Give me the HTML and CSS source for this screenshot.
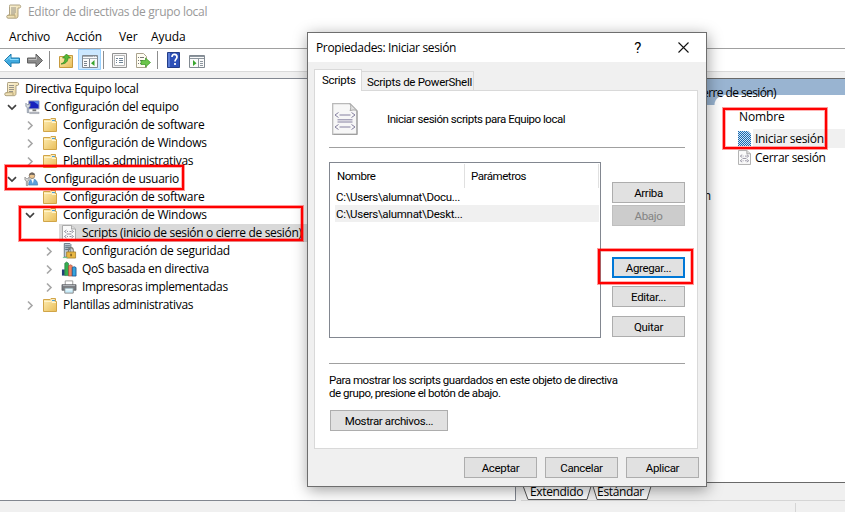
FILE: index.html
```
<!DOCTYPE html>
<html lang="es">
<head>
<meta charset="utf-8">
<title>Editor de directivas de grupo local</title>
<link rel="stylesheet" href="styles.css">
</head>
<body>
<svg class="defs" width="0" height="0">
  <defs>
    <linearGradient id="paper" x1="0" y1="0" x2="1" y2="1"><stop offset="0" stop-color="#fff8dc"/><stop offset="1" stop-color="#e5d09b"/></linearGradient>
    <linearGradient id="fold" x1="0" y1="0" x2="1" y2="1"><stop offset="0" stop-color="#ffeeb5"/><stop offset="1" stop-color="#e8bd57"/></linearGradient>
    <pattern id="dots" width="2" height="2" patternUnits="userSpaceOnUse"><rect width="2" height="2" fill="#cfe3f4"/><rect width="1" height="1" fill="#1668b0"/><rect x="1" y="1" width="1" height="1" fill="#1668b0"/></pattern>
    <symbol id="scroll" viewBox="0 0 16 16"><path d="M4 1.500h9.500c1.600 0 1.600 3 0 3H12v8c0 1.500-.8 2.200-2 2.200H2c-1.700 0-1.700-3 0-3h1.500V3C3.500 2 3.500 1.500 4 1.500z" fill="url(#paper)" stroke="#a79a78" stroke-width=".9"/><path d="M5 4.500h5M5 6.500h5M5 8.500h5M5 10.500h4" stroke="#8c8a84" stroke-width=".9"/><path d="M2 11.700h7v2.300" fill="none" stroke="#b9a878"/></symbol>
    <symbol id="folder" viewBox="0 0 16 16"><path d="M1.500 2.500H8l1-1h4.500v3h1v10h-13z" fill="url(#fold)" stroke="#d1a548"/><path d="M9.500 2.500h3v2h-3z" fill="#fff"/><path d="M10 3.500h3" stroke="#4da0d5"/><path d="M2 4.500h7l1 1h4" fill="none" stroke="#fff3c9"/></symbol>
    <symbol id="script" viewBox="0 0 14 16"><path d="M.5.5h9l4 3.500v11.500H.5z" fill="#fafafa" stroke="#aaa"/><path d="M9.500.5V4h4" fill="#ddd" stroke="#999" stroke-width=".8"/><path d="M4.500 5 2.500 6.500l2 1.500M9.500 5l2 1.500-2 1.500M4.500 10l-2 1.500 2 1.500M9.500 10l2 1.500-2 1.500M5 6.500h1m1.500 0h2M5 11.500h1m1.500 0h2M5 9h4" fill="none" stroke="#777386" stroke-width=".8"/></symbol>
    <symbol id="bigscript" viewBox="0 0 26 32"><path d="M.7.7H18l7 7v23.600H.7z" fill="#f7f7f7" stroke="#b9b9b9" stroke-width="1.300"/><path d="M25 8v23.300H1.500" fill="none" stroke="#999"/><path d="M18 .7c1 2 1 5 0 7 3-1 5-1 7 0z" fill="#e2e2e2" stroke="#aaa"/><path d="M6.500 9.500 3 12l3.500 2.500M19.500 9.500 23 12l-3.500 2.500M7.500 12h11M6.500 21.500 3 24l3.500 2.500M19.500 21.500 23 24l-3.500 2.500M7.500 24h11M5.500 16.800h15M5.500 19h15" fill="none" stroke="#8580a0" stroke-width="1"/></symbol>
    <symbol id="down" viewBox="0 0 16 16"><path d="m4 6.200 4 3.800 4-3.800" fill="none" stroke="#404040" stroke-width="1.700"/></symbol>
    <symbol id="right" viewBox="0 0 16 16"><path d="m6 4.500 4 4-4 4" fill="none" stroke="#a6a6a6" stroke-width="1.600"/></symbol>
    <symbol id="computer" viewBox="0 0 17 16"><path d="M5 1.500h11v8.500H5z" fill="#1822bd" stroke="#a3aaba"/><path d="M10 2h5.500v4z" fill="#5f8fe8"/><path d="M9 10.500h4v2H9z" fill="#777"/><path d="M6 13.500h10v1.500H6z" fill="#b9bcc4" stroke="#858b96" stroke-width=".5"/><path d="M2 4v3.500l1.500 1V14h1.500V8.500l1.500-1V4L5 5.500H3.500z" fill="#d8dde3" stroke="#6f7c8c" stroke-width=".7"/></symbol>
    <symbol id="user" viewBox="0 0 17 16"><circle cx="8.500" cy="4.500" r="3" fill="#edc58d" stroke="#85705b" stroke-width=".7"/><path d="M5.500 4.500C5 0 12 0 11.500 4 9.500 4 8 2.500 5.500 4.500z" fill="#6e655e"/><path d="M5 14.500c0-5 2-6.500 4-6.500 3 0 5.500 2 5.500 6.500z" fill="#5b9fdb" stroke="#35729f" stroke-width=".6"/><path d="m7.500 8 2 5 1-5z" fill="#fff"/><path d="M1 6v3l1.500 1v5H4v-5l1.500-1V6L4 7.500H2.500z" fill="#ddd" stroke="#777" stroke-width=".7"/></symbol>
    <symbol id="server" viewBox="0 0 17 17"><path d="M3.500.5h6l1 1V15h-7z" fill="#c0ccd5" stroke="#647683"/><path d="M4.500 3h5M4.500 5h5M4.500 7h5" stroke="#506775"/><path d="M8 9.500V8c0-4 5-4 5 0v1.500" fill="none" stroke="#7b7b75" stroke-width="1.300"/><path d="M6 9.500h9.500V16H6z" fill="#e9b743" stroke="#a27a25" stroke-width=".8"/><path d="M10.700 11.500V14" stroke="#684e1a" stroke-width="1.400"/><path d="M2 15.500h5" stroke="#70c98b"/></symbol>
    <symbol id="bars" viewBox="0 0 17 17"><path d="M1 9h3v6.500H1z" fill="#223f78"/><path d="M4 2.500 6 1l2 1.500v13H4z" fill="#36ae50" stroke="#196b39" stroke-width=".6"/><path d="M8 5l2-1 2 1v11H8z" fill="#f18462" stroke="#943e2d" stroke-width=".6"/><path d="m12 7 2-1 2 1v9h-4z" fill="#36a5de" stroke="#174a86" stroke-width=".8"/></symbol>
    <symbol id="printer" viewBox="0 0 17 16"><path d="M4.500 1.500h8v5h-8z" fill="#fff" stroke="#999"/><path d="M1 5.500h15v6H1z" fill="#777b80" stroke="#55595d" stroke-width=".7"/><path d="M2 6.500h13" stroke="#b9bdc1"/><path d="M4 9h9v5.500H4z" fill="#c7ecfa" stroke="#888"/><path d="M5 11h7" stroke="#fff"/></symbol>
  </defs>
</svg>
<div class="window">
  <header class="titlebar"><svg class="title-icon"><use href="#scroll"/></svg><span>Editor de directivas de grupo local</span></header>
  <nav class="menu"><span class="m1">Archivo</span><span class="m2">Acción</span><span class="m3">Ver</span><span class="m4">Ayuda</span></nav>
  <div class="toolbar">
    <svg width="220" height="22" viewBox="0 50 220 22">
      <path d="M4.500 61.500 11 55v4h8.500v5H11v4z" fill="#40aadf" stroke="#217cad"/><path d="m6 61.500 4-4v3h8.500" fill="none" stroke="#8bdcff"/>
      <path d="M42.500 61.500 36 55v4h-8.500v5H36v4z" fill="#8a8a8a" stroke="#606060"/><path d="M28.500 60.500h8v-3" fill="none" stroke="#bbb"/>
      <path d="M49.500 52v18M103.500 52v18M157.500 52v18" stroke="#8d8d8d"/>
      <path d="M59.500 57.500H65l1-1h6.500v12h-13z" fill="url(#fold)" stroke="#c69a3e"/><path d="M61 65c3-1 4-3 4-6h-2.500l4-4 4 4H68c0 4-3 6-7 6z" fill="#54b935" stroke="#338421" stroke-width=".7"/>
      <path d="M78.500 50.500h22v20h-22z" fill="#cce8ff" stroke="#99d1ff"/>
      <path d="M82.500 56.500h15v12h-15z" fill="#fafafa" stroke="#818991"/><path d="M83 57.500h14M83 59.500h14" stroke="#a6adb4"/><path d="M93 58h1m1 0h1" stroke="#fff"/>
      <path d="M89.500 60v8M84 62.500h3m-3 2h3m-3 2h3" stroke="#7b858e"/><path d="m94.500 61-3.500 3.200 3.500 2.800z" fill="#38a52d"/>
      <path d="M112.500 54.500h14v14h-14z" fill="#f5f5f5" stroke="#929292"/><path d="M114.500 56.500h10v10h-10z" fill="#fff" stroke="#b6b6b6"/><path d="M116 59.500h2m1 0h4m-7 2h1m2 0h4m-7 2h1m2 0h4" stroke="#6e8395"/>
      <path d="M136.500 54.500h7l3 3v11h-10z" fill="#fffdf2" stroke="#aaa38d"/><path d="M138 58.500h1m1 0h4m-6 3h1m1 0h3m-5 3h1m1 0h3" stroke="#777"/><path d="M141 61.500h4.500V59l5 4.500-5 4.500v-2.500H141z" fill="#6bc54b" stroke="#3b9327" stroke-width=".7"/>
      <path d="M167.500 53.500h12v15h-12z" fill="#2c50b8" stroke="#233d87"/><path d="M168 54h2v14h-2z" fill="#597bd5"/><path d="M172 58c0-4 5-3 5 0 0 2-2 2-2 4.500m0 1.500v2" fill="none" stroke="#fff" stroke-width="1.700"/>
      <path d="M189.500 56.500h15v12h-15z" fill="#fafafa" stroke="#818991"/><path d="M190 57.500h14M190 59.500h14M198.500 60v8M200 62.500h3m-3 2h3m-3 2h3" stroke="#8d969e"/><path d="m193 61 3.500 3.200L193 67z" fill="#38a52d"/>
    </svg>
  </div>
  <div class="gap"></div>
  <main class="panes">
    <section class="tree">
      <div class="row l0"><svg class="icon"><use href="#scroll"/></svg><span>Directiva Equipo local</span></div>
      <div class="row l1"><svg class="chev"><use href="#down"/></svg><svg class="icon"><use href="#computer"/></svg><span>Configuración del equipo</span></div>
      <div class="row l2"><svg class="chev"><use href="#right"/></svg><svg class="icon"><use href="#folder"/></svg><span>Configuración de software</span></div>
      <div class="row l2"><svg class="chev"><use href="#right"/></svg><svg class="icon"><use href="#folder"/></svg><span>Configuración de Windows</span></div>
      <div class="row l2 tight"><svg class="chev"><use href="#right"/></svg><svg class="icon"><use href="#folder"/></svg><span>Plantillas administrativas</span></div>
      <div class="row l1"><svg class="chev"><use href="#down"/></svg><svg class="icon"><use href="#user"/></svg><span>Configuración de usuario</span></div>
      <div class="row l2"><i class="chev"></i><svg class="icon"><use href="#folder"/></svg><span>Configuración de software</span></div>
      <div class="row l2"><svg class="chev"><use href="#down"/></svg><svg class="icon"><use href="#folder"/></svg><span>Configuración de Windows</span></div>
      <div class="row l3 tight selected"><i class="chev"></i><svg class="icon"><use href="#script"/></svg><span>Scripts (inicio de sesión o cierre de sesión)</span></div>
      <div class="row l3"><svg class="chev"><use href="#right"/></svg><svg class="icon"><use href="#server"/></svg><span>Configuración de seguridad</span></div>
      <div class="row l3 tight"><svg class="chev"><use href="#right"/></svg><svg class="icon"><use href="#bars"/></svg><span>QoS basada en directiva</span></div>
      <div class="row l3 tight"><svg class="chev"><use href="#right"/></svg><svg class="icon"><use href="#printer"/></svg><span>Impresoras implementadas</span></div>
      <div class="row l2 tight"><svg class="chev"><use href="#right"/></svg><svg class="icon"><use href="#folder"/></svg><span>Plantillas administrativas</span></div>
    </section>
    <section class="results">
      <div class="result-view">
        <div class="band"><span>Scripts (inicio de sesión o cierre de sesión)</span></div>
        <div class="result-body">
          <div class="description">n</div>
          <div class="items">
            <div class="col-title">Nombre</div>
            <div class="item"><svg class="item-icon"><path d="M0 0h10l3 3v12H0z" fill="url(#dots)"/></svg><span class="hot">Iniciar sesión</span></div>
            <div class="item"><svg class="item-icon"><use href="#script"/></svg><span>Cerrar sesión</span></div>
          </div>
        </div>
      </div>
      <div class="view-tabs">
        <svg class="tab-lines" viewBox="0 0 140 18"><path d="M1 0 7 16.500h59L71 0 76 16.500h50L131 0z" fill="#fff"/><path d="m1 0 6 16.500h59L71 0l5 16.500h50L131 0" fill="none" stroke="#555"/></svg>
        <span>Extendido</span><span>Estándar</span>
      </div>
    </section>
  </main>
  <footer class="status"><i></i></footer>
</div>

<section class="dialog">
  <header class="dialog-title"><span>Propiedades: Iniciar sesión</span><b>?</b><svg width="11" height="11"><path d="m.5.5 10 10m0-10-10 10" stroke="#111" stroke-width="1.100"/></svg></header>
  <div class="tabs"><span class="tab active">Scripts</span><span class="tab">Scripts de PowerShell</span></div>
  <div class="panel">
    <div class="intro"><svg width="26" height="32"><use href="#bigscript"/></svg><span>Iniciar sesión scripts para Equipo local</span></div>
    <hr>
    <div class="editor">
      <div class="list">
        <div class="list-head"><span>Nombre</span><span>Parámetros</span></div>
        <div class="entry">C:\Users\alumnat\Docu...</div>
        <div class="entry current">C:\Users\alumnat\Deskt...</div>
      </div>
      <div class="actions">
        <button>Arriba</button><button class="off" disabled>Abajo</button><button class="default">Agregar...</button><button class="edit">Editar...</button><button class="quit">Quitar</button>
      </div>
    </div>
    <hr class="second">
    <p>Para mostrar los scripts guardados en este objeto de directiva<br><span>de grupo, presione el botón de abajo.</span></p>
    <button class="show">Mostrar archivos...</button>
  </div>
  <footer class="dialog-buttons"><button>Aceptar</button><button>Cancelar</button><button>Aplicar</button></footer>
</section>
<i class="mark mark-user"></i><i class="mark mark-windows"></i><i class="mark mark-add"></i><i class="mark mark-login"></i>
</body>
</html>
```
FILE: styles.css
```
* { box-sizing: border-box; }
body { margin: 0; width: 845px; height: 512px; overflow: hidden; position: relative; background: #fff; color: #000; font: 12px "Open Sans", "Noto Sans", sans-serif; white-space: nowrap; }
.defs { position: absolute; }
svg { display: block; flex: none; }
.window { height: 512px; display: flex; flex-direction: column; letter-spacing: -.23px; }
.titlebar { height: 24px; padding: 0 0 2px 6px; display: flex; align-items: center; gap: 6px; color: #999; letter-spacing: -.3px; }
.title-icon { width: 16px; height: 17px; }
.menu { height: 24px; padding-left: 9px; display: flex; align-items: center; letter-spacing: -.1px; }
.m1 { width: 57px; }
.m2 { width: 53px; }
.m3 { width: 32px; }
.toolbar { height: 24px; border-top: 1px solid #a0a0a0; border-bottom: 1px solid #dadada; }
.gap { height: 6px; background: #f0f0f0; }
.panes { height: 423px; display: flex; background: #f0f0f0; }
.tree { width: 516px; background: #fff; border: solid #828790; border-width: 1px 1px 1px 0; padding-top: 1px; }
.row { height: 18px; display: flex; align-items: center; }
.row span { padding-bottom: 1px; }
.tight { letter-spacing: -.34px; }
.chev { width: 16px; height: 16px; margin-right: 4px; flex: none; }
.icon { width: 16px; height: 16px; margin-right: 5px; }
.l0 { padding-left: 4px; letter-spacing: -.3px; }
.l1 { padding-left: 4px; }
.l1 .icon { margin-right: 4px; }
.l2 { padding-left: 22px; }
.l3 { padding-left: 41px; }
.selected { background: linear-gradient(90deg, transparent 59px, #d9d9d9 59px); }
.results { margin-left: 5px; flex: 1; display: flex; flex-direction: column; }
.result-view { height: 405px; background: #fff; border-top: 1px solid #696969; border-bottom: 1px solid #696969; }
.band { height: 26px; padding: 5px 0 0 34px; background: linear-gradient(#99b4d1, #99b4d1) 0 0 / 100% 16px no-repeat, radial-gradient(circle at 100% 100%, transparent 9px, #99b4d1 10px) 193px 16px / 10px 10px no-repeat, linear-gradient(#99b4d1, #99b4d1) 0 16px / 193px 10px no-repeat; }
.band span { display: block; width: 221px; text-align: right; line-height: 17px; letter-spacing: -.6px; }
.result-body { display: flex; }
.description { width: 190px; padding-top: 82px; text-align: right; }
.items { flex: 1; padding-left: 27px; }
.col-title { height: 24px; line-height: 24px; padding-left: 1px; letter-spacing: -.1px; }
.item { height: 19px; display: flex; align-items: center; }
.item-icon { width: 13px; height: 15px; margin-right: 2px; }
.item span { flex: 1; height: 19px; line-height: 19px; padding-left: 2px; letter-spacing: -.3px; }
.item .hot { background: #f0f0f0; }
.view-tabs { height: 18px; padding-left: 9px; display: flex; position: relative; border-bottom: 1px solid #d5d5d5; line-height: 17px; gap: 14px; letter-spacing: -.35px; }
.view-tabs span { position: relative; }
.tab-lines { position: absolute; left: 0; top: 0; width: 140px; height: 18px; }
.status { flex: 1; background: #f0f0f0; padding: 2px 0 0 795px; }
.status i { display: block; width: 1px; height: 9px; background: #d5d5d5; }

.dialog { position: absolute; left: 307px; top: 32px; width: 400px; height: 455px; border: 1px solid #6e6e6e; background: #f0f0f0; box-shadow: 1px 3px 14px rgba(0,0,0,.38); font-family: Roboto, "Liberation Sans", sans-serif; font-size: 11.5px; letter-spacing: -.45px; }
.dialog-title { height: 29px; background: #fff; padding: 0 17px 0 8px; display: flex; align-items: center; font: 12px "Open Sans", sans-serif; letter-spacing: -.35px; }
.dialog-title span { flex: 1; }
.dialog-title b { font: 15px Roboto, sans-serif; margin-right: 37px; }
.tabs { height: 28px; padding: 7px 0 0 6px; display: flex; align-items: flex-end; }
.tab { height: 19px; width: 112px; border: 1px solid #d9d9d9; border-left: 0; border-bottom: 0; padding: 3px 0 0 5px; letter-spacing: -.3px; }
.tab.active { width: 48px; height: 22px; border-left: 1px solid #d9d9d9; background: #fff; padding-left: 7px; margin-bottom: -1px; position: relative; }
.panel { margin-left: 6px; width: 384px; height: 359px; background: #fff; border: 1px solid #d9d9d9; padding: 12px 12px 0 14px; }
.intro { height: 44px; padding-left: 3px; display: flex; gap: 29px; }
.intro span { line-height: 32px; }
hr { border: 0; height: 1px; background: #a0a0a0; margin: 0; width: 356px; }
.editor { height: 176px; margin-top: 14px; display: flex; }
.list { width: 272px; border: 1px solid #828790; padding: 1px 1px 0 5px; }
.list-head { height: 24px; display: flex; line-height: 25px; }
.list-head span { width: 130px; border-right: 1px solid #e0e0e0; padding-left: 2px; }
.list-head span + span { width: 134px; padding-left: 6px; }
.entry { height: 17px; line-height: 18px; padding-left: 1px; letter-spacing: -.3px; }
.current { background: #f0f0f0; }
.actions { margin-left: 11px; padding-top: 20px; display: flex; flex-direction: column; }
button { width: 73px; height: 21px; padding: 0; border: 1px solid #adadad; background: #e1e1e1; color: #000; font: inherit; letter-spacing: -.35px; }
.off { margin-top: 2px; background: #ccc; border-color: #bfbfbf; color: #838383; }
.default { margin-top: 31px; border: 2px solid #0078d7; }
.edit { margin-top: 8px; }
.quit { margin-top: 9px; }
.second { margin-top: 25px; }
p { margin: 10px 0; line-height: 13px; }
.show { margin-left: 1px; width: 118px; }
.dialog-buttons { padding: 8px 7px 0 156px; display: flex; gap: 8px; }
.mark { position: absolute; border: 2px solid #f00; box-shadow: 0 0 0 1px rgba(255,0,0,.4), inset 0 0 0 1px rgba(255,0,0,.3); }
.mark-user { left: 5px; top: 165px; width: 179px; height: 25px; }
.mark-windows { left: 19px; top: 206px; width: 284px; height: 35px; }
.mark-add { left: 598px; top: 249px; width: 95px; height: 35px; }
.mark-login { left: 723px; top: 108px; width: 104px; height: 41px; }
```
